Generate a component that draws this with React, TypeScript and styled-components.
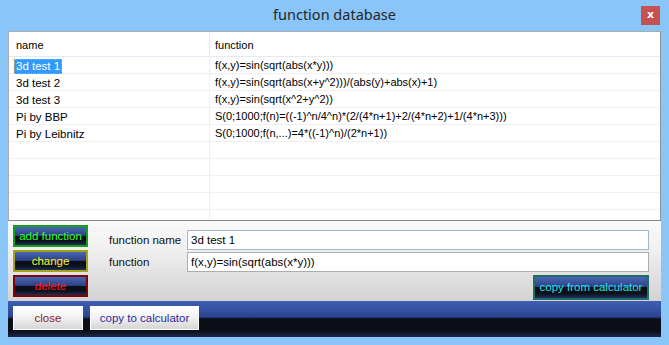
import React from 'react'
import styled, { createGlobalStyle } from 'styled-components'

const GlobalStyle = createGlobalStyle`
  html, body {
    margin: 0;
    padding: 0;
    background: #8ac5f8;
  }
  body {
    font-family: "Liberation Sans", Arial, sans-serif;
  }
`

const functions = [
  { name: '3d test 1', fn: 'f(x,y)=sin(sqrt(abs(x*y)))' },
  { name: '3d test 2', fn: 'f(x,y)=sin(sqrt(abs(x+y^2)))/(abs(y)+abs(x)+1)' },
  { name: '3d test 3', fn: 'f(x,y)=sin(sqrt(x^2+y^2))' },
  { name: 'Pi by BBP', fn: 'S(0;1000;f(n)=((-1)^n/4^n)*(2/(4*n+1)+2/(4*n+2)+1/(4*n+3)))' },
  { name: 'Pi by Leibnitz', fn: 'S(0;1000;f(n,...)=4*((-1)^n)/(2*n+1))' },
]

const EMPTY_ROWS = 5

const tones = {
  green: { border: '#13a013', text: '#2cff2c' },
  yellow: { border: '#a3a21c', text: '#f8f81a' },
  red: { border: '#7c0606', text: '#ff1a1a' },
  teal: { border: '#1e6f66', text: '#22e4f2' },
}

type Tone = keyof typeof tones

export default function App() {
  return (
    <>
      <GlobalStyle />
      <Window>
        <TitleBar>
          <span />
          <Title>function database</Title>
          <CloseButton>x</CloseButton>
        </TitleBar>
        <Client>
          <List>
            <HeaderRow>
              <HeaderCell>name</HeaderCell>
              <HeaderCell>function</HeaderCell>
            </HeaderRow>
            {functions.map((f, i) => (
              <Row key={f.name}>
                <NameCell>
                  <CellText $selected={i === 0}>{f.name}</CellText>
                </NameCell>
                <FnCell>{f.fn}</FnCell>
              </Row>
            ))}
            {Array.from({ length: EMPTY_ROWS }).map((_, i) => (
              <Row key={'empty' + i}>
                <NameCell />
                <FnCell />
              </Row>
            ))}
          </List>

          <Panel>
            <ActionColumn>
              <DarkButton $tone="green">add function</DarkButton>
              <DarkButton $tone="yellow">change</DarkButton>
              <DarkButton $tone="red">delete</DarkButton>
            </ActionColumn>
            <Form>
              <Field>
                <Label>function name</Label>
                <Input $focused defaultValue="3d test 1" />
              </Field>
              <Field>
                <Label>function</Label>
                <Input defaultValue="f(x,y)=sin(sqrt(abs(x*y)))" />
              </Field>
              <CopyFromButton $tone="teal">copy from calculator</CopyFromButton>
            </Form>
          </Panel>

          <Footer>
            <LightButton $color="#8e1b1b" $width={70}>close</LightButton>
            <LightButton $color="#2b2b9c" $width={109}>copy to calculator</LightButton>
          </Footer>
        </Client>
      </Window>
    </>
  )
}

const Window = styled.div`
  width: 669px;
  height: 345px;
  box-sizing: border-box;
  background: #8ac5f8;
  display: flex;
  flex-direction: column;
  overflow: hidden;
`

const TitleBar = styled.div`
  height: 31px;
  flex: none;
  display: grid;
  grid-template-columns: 1fr auto 1fr;
  align-items: start;
`

const Title = styled.div`
  font-family: "Noto Sans", "Open Sans", sans-serif;
  font-size: 14.5px;
  line-height: 31px;
  color: #262626;
  margin-top: -1px;
`

const CloseButton = styled.div`
  justify-self: end;
  margin: 6px 9px 0 0;
  width: 19px;
  height: 19px;
  background: #c75050;
  color: #ffffff;
  font-family: "DejaVu Sans", sans-serif;
  font-weight: bold;
  font-size: 11px;
  line-height: 18px;
  text-align: center;
`

const Client = styled.div`
  flex: 1;
  margin: 0 8px 8px 8px;
  display: flex;
  flex-direction: column;
  min-height: 0;
`

const List = styled.div`
  height: 190px;
  flex: none;
  box-sizing: border-box;
  background: #ffffff;
  border: 1px solid #abadb3;
  border-bottom-color: #7f8792;
  border-right-color: #8d939c;
  overflow: hidden;
  font-size: 11.5px;
  color: #000000;
`

const HeaderRow = styled.div`
  display: grid;
  grid-template-columns: 200px 1fr;
  height: 24px;
  border-bottom: 1px solid #e2eaf4;
  font-size: 11px;
`

const HeaderCell = styled.div`
  padding-left: 7px;
  line-height: 26px;
  & + & {
    border-left: 1px solid #e4ebf3;
    padding-left: 5px;
  }
`

const Row = styled.div`
  display: grid;
  grid-template-columns: 200px 1fr;
  height: 16px;
  border-bottom: 1px solid #f0f0f0;
`

const NameCell = styled.div`
  padding-left: 5px;
  display: flex;
  align-items: flex-end;
  white-space: nowrap;
`

const CellText = styled.span<{ $selected?: boolean }>`
  padding: 0 1px;
  line-height: 13px;
  border: 1px dotted transparent;
  ${(p) =>
    p.$selected &&
    `
    background: #3399ff;
    color: #ffffff;
    border-color: #f09a3c;
  `}
`

const FnCell = styled.div`
  border-left: 1px solid #f0f0f0;
  padding-left: 5px;
  line-height: 17px;
  font-size: 11px;
  white-space: nowrap;
`

const Panel = styled.div`
  height: 80px;
  flex: none;
  box-sizing: border-box;
  display: flex;
  padding: 4px 12px 0 5px;
  background: linear-gradient(to bottom, #fafafa 0%, #f2f2f2 30%, #d3d3d3 100%);
`

const ActionColumn = styled.div`
  width: 75px;
  display: flex;
  flex-direction: column;
  gap: 3px;
`

const DarkButton = styled.div<{ $tone: Tone }>`
  height: 22px;
  box-sizing: border-box;
  border: 2px solid ${(p) => tones[p.$tone].border};
  background: linear-gradient(
    to bottom,
    #4866b2 0%,
    #2d4185 47%,
    #0b0e16 50%,
    #0c1019 78%,
    #1f2e5c 100%
  );
  color: ${(p) => tones[p.$tone].text};
  font-size: 11.5px;
  line-height: 18px;
  text-align: center;
  white-space: nowrap;
`

const CopyFromButton = styled(DarkButton)`
  align-self: flex-end;
  width: 116px;
  height: 25px;
  line-height: 21px;
  margin-top: 1px;
`

const Form = styled.div`
  flex: 1;
  margin-left: 21px;
  padding-top: 5px;
  display: flex;
  flex-direction: column;
  gap: 2px;
`

const Field = styled.div`
  display: flex;
  align-items: center;
  height: 20px;
`

const Label = styled.div`
  width: 78px;
  flex: none;
  font-size: 11.5px;
  color: #111111;
`

const Input = styled.input<{ $focused?: boolean }>`
  flex: 1;
  height: 20px;
  box-sizing: border-box;
  border: 1px solid ${(p) => (p.$focused ? '#a2b6cf' : '#adadad')};
  background: #ffffff;
  padding: 0 3px;
  font-family: "Liberation Sans", Arial, sans-serif;
  font-size: 11.5px;
  color: #000000;
  outline: none;
`

const Footer = styled.div`
  height: 36px;
  flex: none;
  box-sizing: border-box;
  display: flex;
  gap: 7px;
  padding: 5px 0 0 5px;
  background: linear-gradient(
    to bottom,
    #3f5fb3 0%,
    #2c4590 44%,
    #16224e 47%,
    #0b0f18 50%,
    #0b0e16 82%,
    #1b2849 100%
  );
`

const LightButton = styled.div<{ $color: string; $width: number }>`
  width: ${(p) => p.$width}px;
  height: 24px;
  box-sizing: border-box;
  border: 1px solid #ffffff;
  background: linear-gradient(to bottom, #ffffff 0%, #f3f3f3 45%, #d5d5d5 100%);
  color: ${(p) => p.$color};
  font-size: 11.5px;
  line-height: 22px;
  text-align: center;
  white-space: nowrap;
`
